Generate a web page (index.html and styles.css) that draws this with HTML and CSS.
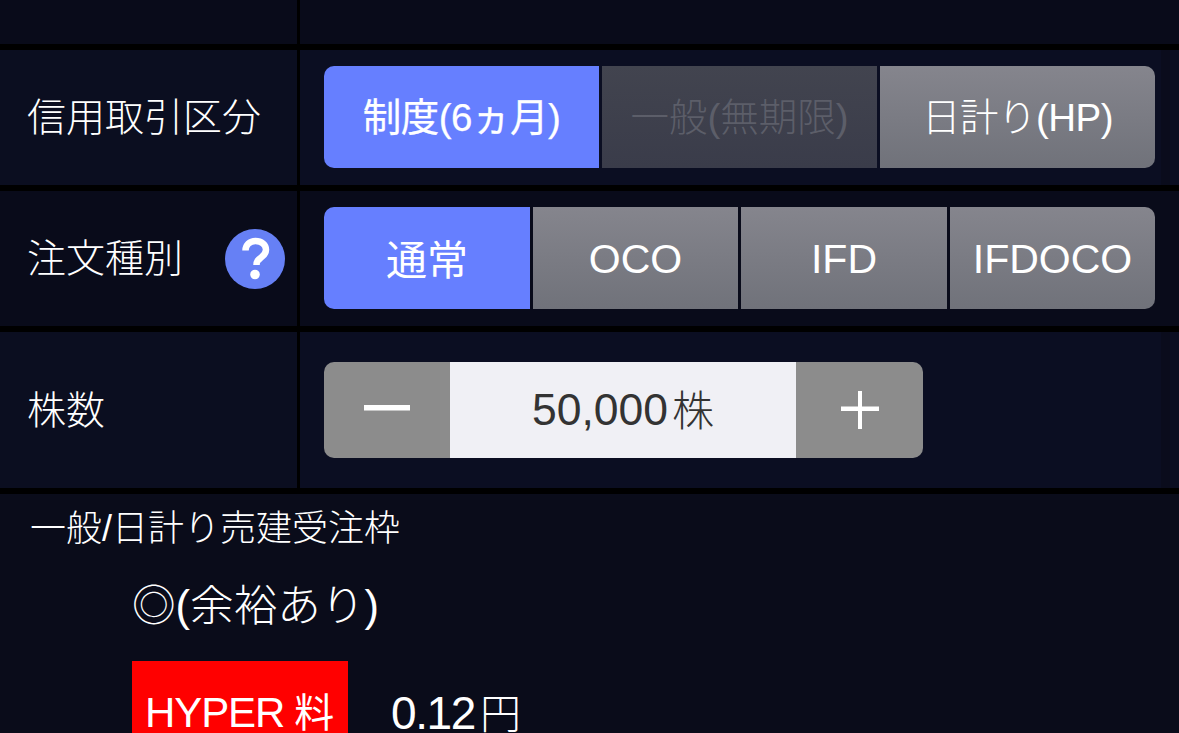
FILE: index.html
```html
<!DOCTYPE html>
<html lang="ja">
<head>
<meta charset="utf-8">
<title>注文</title>
<link rel="stylesheet" href="styles.css">
</head>
<body>
<div class="page">
  <div class="row row-top">
    <div class="label"></div>
    <div class="cell"></div>
  </div>
  <div class="row row-seg row-a">
    <div class="label"><span>信用取引区分</span></div>
    <div class="cell">
      <div class="seg">
        <div class="btn on tab-1">制度(6ヵ月)</div>
        <div class="btn off tab-2">一般(無期限)</div>
        <div class="btn tab-3">日計り(HP)</div>
      </div>
    </div>
  </div>
  <div class="row row-seg row-b">
    <div class="label"><span>注文種別</span>
      <svg class="help" viewBox="0 0 60 60" aria-hidden="true">
        <circle cx="30" cy="30" r="30" fill="#6680f5"/>
        <path d="M20.500 21.500c0-5.500 4.300-9.500 10-9.500 6 0 10.500 3.600 10.500 8.800 0 3.700-2 5.700-5 7.800-2.900 2-4.500 3.300-4.500 7.400" fill="none" stroke="#fff" stroke-width="6.500"/>
        <circle cx="30" cy="45.500" r="4.800" fill="#fff"/>
      </svg>
    </div>
    <div class="cell">
      <div class="seg seg-four">
        <div class="btn on cjk">通常</div>
        <div class="btn">OCO</div>
        <div class="btn">IFD</div>
        <div class="btn">IFDOCO</div>
      </div>
    </div>
  </div>
  <div class="row row-qty">
    <div class="label"><span>株数</span></div>
    <div class="cell">
      <div class="stepper">
        <div class="step">
          <svg class="step-minus" viewBox="0 0 46 46" aria-hidden="true"><rect x="0" y="18" width="46" height="5.500" fill="#fff"/></svg>
        </div>
        <div class="qty">50,000<span class="qty-unit">株</span></div>
        <div class="step">
          <svg class="step-plus" viewBox="0 1 38 38" aria-hidden="true"><path d="M0 16.500h38v4.500H0zM17 1h4v38h-4z" fill="#fff"/></svg>
        </div>
      </div>
    </div>
  </div>
  <div class="info">
    <div class="info-title">一般/日計り売建受注枠</div>
    <div class="info-status">◎(余裕あり)</div>
    <div class="fee">
      <div class="fee-tag"><span class="fee-latin">HYPER</span><span class="fee-kanji">料</span></div>
      <div class="fee-value"><span class="fee-num">0.12</span><span class="fee-yen">円</span></div>
    </div>
  </div>
</div>
</body>
</html>
```
FILE: styles.css
```css
* { box-sizing: border-box; }
html, body { margin: 0; padding: 0; background: #000; }
body {
  font-family: "Liberation Sans", "Noto Sans CJK JP", sans-serif;
  color: #fff;
  width: 1179px;
  height: 733px;
  overflow: hidden;
}
.page { display: flex; flex-direction: column; gap: 6px; height: 733px; overflow: hidden; }
.row { display: grid; grid-template-columns: 297px 1fr; column-gap: 3px; flex: none; }
.row-top { height: 44px; }
.row-seg { height: 135px; }
.row-qty { height: 156px; }
.label {
  background: #0b0e20;
  display: flex;
  align-items: center;
  justify-content: space-between;
  padding: 0 12px 7px 27px;
  font-size: 39px;
  font-weight: 300;
  font-family: "Noto Sans CJK JP", sans-serif;
  color: #fff;
}
.cell {
  background: linear-gradient(to right, #0b0e22 0, #0b0e22 861px, #0a0c1c 861px, #0a0c1c 870px, #0b0e22 870px);
  padding: 16px 24px 0;
}
.row-top .label, .row-top .cell { background: #090b1a; }
.row-b .label, .row-b .cell { background: #090b1a; }
.seg { display: flex; gap: 3px; height: 102px; border-radius: 10px; overflow: hidden; }
.btn {
  flex: 1 1 0;
  display: flex;
  align-items: center;
  justify-content: center;
  background: linear-gradient(to bottom, #85858d, #70727a);
  font-size: 38.500px;
  color: #fff;
  font-weight: 300;
  padding-bottom: 6px;
}
.on { background: #667fff; font-weight: 400; }
.off { background: linear-gradient(to bottom, #42444f, #3a3c4a); color: #5c5e69; }
.tab-1 { flex: 0 0 275px; letter-spacing: -0.500px; -webkit-text-stroke: 0.250px #fff; }
.tab-2 { flex: 0 0 275px; }
.tab-3 { letter-spacing: -0.500px; }
.seg-four .btn { font-size: 41px; padding: 2px 0 0; }
.seg-four .cjk { padding: 0 0 3px; }
.seg-four .btn:first-child { flex: 0 0 206px; }
.seg-four .btn:nth-child(2) { flex: 0 0 205px; }
.seg-four .btn:nth-child(3) { flex: 0 0 206px; }
.help { width: 60px; height: 60px; flex: none; margin-top: 7px; }
.stepper {
  display: grid;
  grid-template-columns: 126px 346px 127px;
  width: 599px;
  height: 96px;
  margin-top: 14px;
  border-radius: 10px;
  overflow: hidden;
}
.step { background: #8c8c8c; display: flex; align-items: center; justify-content: center; }
.step-minus { width: 46px; height: 46px; display: block; }
.step-plus { width: 38px; height: 38px; display: block; }
.qty {
  background: #f0f0f5;
  color: #333;
  display: flex;
  align-items: center;
  justify-content: center;
  font-size: 44.500px;
  font-weight: 300;
}
.qty-unit { font-size: 42px; margin-left: 4px; padding-bottom: 6px; }
.info { background: #0a0c1a; flex: none; height: 260px; padding: 13px 0 0 30px; }
.info-title { font-size: 36px; line-height: 44px; font-weight: 300; }
.info-status { margin: 27px 0 0 102px; font-size: 43.600px; line-height: 56px; font-weight: 300; }
.fee { display: flex; margin: 27px 0 0 102px; gap: 43px; }
.fee-tag {
  width: 216px;
  height: 110px;
  padding-left: 13px;
  background: #f00;
  display: flex;
  align-items: baseline;
  line-height: 104px;
}
.fee-latin { font-size: 42px; letter-spacing: -1.100px; }
.fee-kanji { font-size: 40px; margin-left: 10px; }
.fee-value { line-height: 104px; }
.fee-num { font-size: 46px; letter-spacing: -1.400px; }
.fee-yen { font-size: 41px; margin-left: 5px; font-weight: 300; }
```
